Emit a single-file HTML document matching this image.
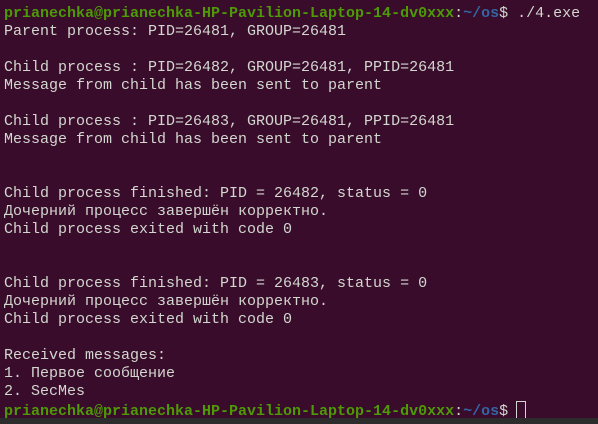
<!DOCTYPE html>
<html><head><meta charset="utf-8"><style>
html,body{margin:0;padding:0;}
body{width:598px;height:424px;background:#380c2a;overflow:hidden;position:relative;}
pre{margin:0;position:absolute;left:4px;top:5px;font-family:"Liberation Mono","DejaVu Sans Mono",monospace;font-size:15px;line-height:18px;color:#d3d7cf;white-space:pre;}
.g{color:#4e9a06;font-weight:bold;}
.b{color:#3465a4;font-weight:bold;}
.cur{display:inline-block;width:10px;height:19px;border:1px solid #d3d7cf;vertical-align:-5px;box-sizing:border-box;margin-left:8px;}
.bar{position:absolute;left:0;bottom:0;width:598px;height:6px;background:#2c2c2c;}
</style></head><body>
<pre><span class="g">prianechka@prianechka-HP-Pavilion-Laptop-14-dv0xxx</span>:<span class="b">~/os</span>$ ./4.exe
Parent process: PID=26481, GROUP=26481

Child process : PID=26482, GROUP=26481, PPID=26481
Message from child has been sent to parent

Child process : PID=26483, GROUP=26481, PPID=26481
Message from child has been sent to parent


Child process finished: PID = 26482, status = 0
Дочерний процесс завершён корректно.
Child process exited with code 0


Child process finished: PID = 26483, status = 0
Дочерний процесс завершён корректно.
Child process exited with code 0

Received messages:
1. Первое сообщение
2. SecMes
<span class="g">prianechka@prianechka-HP-Pavilion-Laptop-14-dv0xxx</span>:<span class="b">~/os</span>$<span class="cur"></span></pre>
<div class="bar"></div>
</body></html>
